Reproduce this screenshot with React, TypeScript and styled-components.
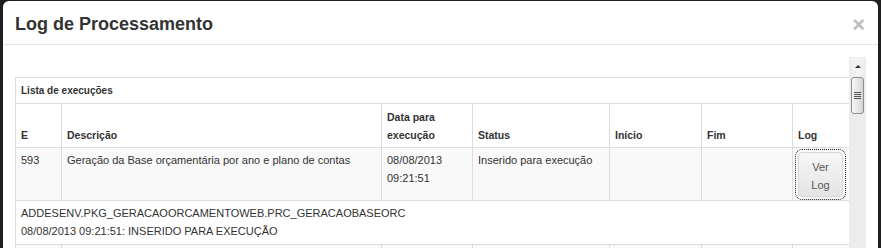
import React from "react";
import styled, { createGlobalStyle } from "styled-components";

const GlobalStyle = createGlobalStyle`
  html, body {
    margin: 0;
    padding: 0;
    background: #1f1f1f;
    overflow: hidden;
    font-family: "Liberation Sans", Arial, sans-serif;
  }
`;

const Modal = styled.div`
  margin: 1px 3px 0 3px;
  width: 875px;
  height: 300px;
  background: #fff;
  border-radius: 6px 6px 0 0;
  box-sizing: border-box;
`;

const Header = styled.div`
  height: 43px;
  border-bottom: 1px solid #e5e5e5;
  display: flex;
  align-items: center;
  justify-content: space-between;
  padding: 0 13px 0 12px;
`;

const Title = styled.h3`
  margin: 3px 0 0;
  font-size: 18px;
  font-weight: bold;
  color: #333;
`;

const Close = styled.span`
  font-size: 22px;
  font-weight: bold;
  line-height: 1;
  color: #bdbdbd;
  margin-top: 4px;
`;

const Body = styled.div`
  display: flex;
  padding: 12px 12px 0 12px;
`;

const ScrollArea = styled.div`
  width: 834px;
  padding-top: 20px;
`;

const Table = styled.table`
  width: 834px;
  table-layout: fixed;
  border-collapse: collapse;
  border: 1px solid #ddd;
  font-size: 11px;
  color: #333;
`;

const CaptionCell = styled.td`
  height: 25px;
  padding: 0 5px;
  font-size: 10px;
  font-weight: bold;
  border: 1px solid #ddd;
`;

const Th = styled.th`
  text-align: left;
  vertical-align: bottom;
  padding: 4px 5px 3px;
  line-height: 18px;
  font-size: 10.5px;
  font-weight: bold;
  border: 1px solid #ddd;
`;

const DataRow = styled.tr`
  background: #f9f9f9;
`;

const Td = styled.td`
  vertical-align: top;
  padding: 3px 5px;
  line-height: 18px;
  border: 1px solid #ddd;
`;

const LogCell = styled.td`
  vertical-align: top;
  padding: 4px 5px 3px;
  border: 1px solid #ddd;
`;

const LogButton = styled.button`
  display: block;
  width: 45px;
  height: 45px;
  padding: 2px 0 0;
  border: 1px solid #d6d6d6;
  border-radius: 4px;
  background: linear-gradient(#f7f7f7, #e4e4e4);
  color: #555;
  font-family: "Liberation Sans", Arial, sans-serif;
  font-size: 11px;
  line-height: 18px;
  text-align: center;
  outline: 1px dotted #222;
  outline-offset: 2px;
`;

const LogText = styled.td`
  padding: 3px 5px 4px;
  line-height: 18px;
  border: 1px solid #ddd;
  background: #fff;
`;

const Scrollbar = styled.div`
  width: 17px;
  height: 200px;
  background: #ececec;
  display: flex;
  flex-direction: column;
  align-items: center;
`;

const ArrowUp = styled.div`
  width: 17px;
  height: 19px;
  display: flex;
  align-items: center;
  justify-content: center;
  background: linear-gradient(90deg, #ececec, #f4f4f4, #ececec);
  &::before {
    content: "";
    width: 0;
    height: 0;
    border-left: 3px solid transparent;
    border-right: 3px solid transparent;
    border-bottom: 3px solid #333;
  }
`;

const Thumb = styled.div`
  margin-top: 1px;
  width: 13px;
  height: 37px;
  box-sizing: border-box;
  border: 1px solid #8f8f8f;
  border-radius: 3px;
  background: linear-gradient(90deg, #f6f6f6, #e4e4e4 60%, #d2d2d2);
  display: flex;
  flex-direction: column;
  align-items: center;
  justify-content: center;
  gap: 1px;
`;

const Grip = styled.div`
  width: 7px;
  height: 1px;
  background: #555;
`;

const widths = [46, 320, 91, 137, 92, 91, 57];

export default function App() {
  return (
    <>
      <GlobalStyle />
      <Modal>
        <Header>
          <Title>Log de Processamento</Title>
          <Close>×</Close>
        </Header>
        <Body>
          <ScrollArea>
            <Table>
              <colgroup>
                {widths.map((w, i) => (
                  <col key={i} style={{ width: w }} />
                ))}
              </colgroup>
              <tbody>
                <tr>
                  <CaptionCell colSpan={7}>Lista de execuções</CaptionCell>
                </tr>
                <tr>
                  <Th>E</Th>
                  <Th>Descrição</Th>
                  <Th>
                    Data para
                    <br />
                    execução
                  </Th>
                  <Th>Status</Th>
                  <Th>Início</Th>
                  <Th>Fim</Th>
                  <Th>Log</Th>
                </tr>
                <DataRow>
                  <Td>593</Td>
                  <Td>Geração da Base orçamentária por ano e plano de contas</Td>
                  <Td>
                    08/08/2013
                    <br />
                    09:21:51
                  </Td>
                  <Td>Inserido para execução</Td>
                  <Td></Td>
                  <Td></Td>
                  <LogCell>
                    <LogButton>
                      Ver
                      <br />
                      Log
                    </LogButton>
                  </LogCell>
                </DataRow>
                <tr>
                  <LogText colSpan={7}>
                    ADDESENV.PKG_GERACAOORCAMENTOWEB.PRC_GERACAOBASEORC
                    <br />
                    08/08/2013 09:21:51: INSERIDO PARA EXECUÇÃO
                  </LogText>
                </tr>
                <DataRow>
                  <Td>&nbsp;</Td>
                  <Td></Td>
                  <Td></Td>
                  <Td></Td>
                  <Td></Td>
                  <Td></Td>
                  <Td></Td>
                </DataRow>
              </tbody>
            </Table>
          </ScrollArea>
          <Scrollbar>
            <ArrowUp />
            <Thumb>
              <Grip />
              <Grip />
              <Grip />
              <Grip />
            </Thumb>
          </Scrollbar>
        </Body>
      </Modal>
    </>
  );
}
